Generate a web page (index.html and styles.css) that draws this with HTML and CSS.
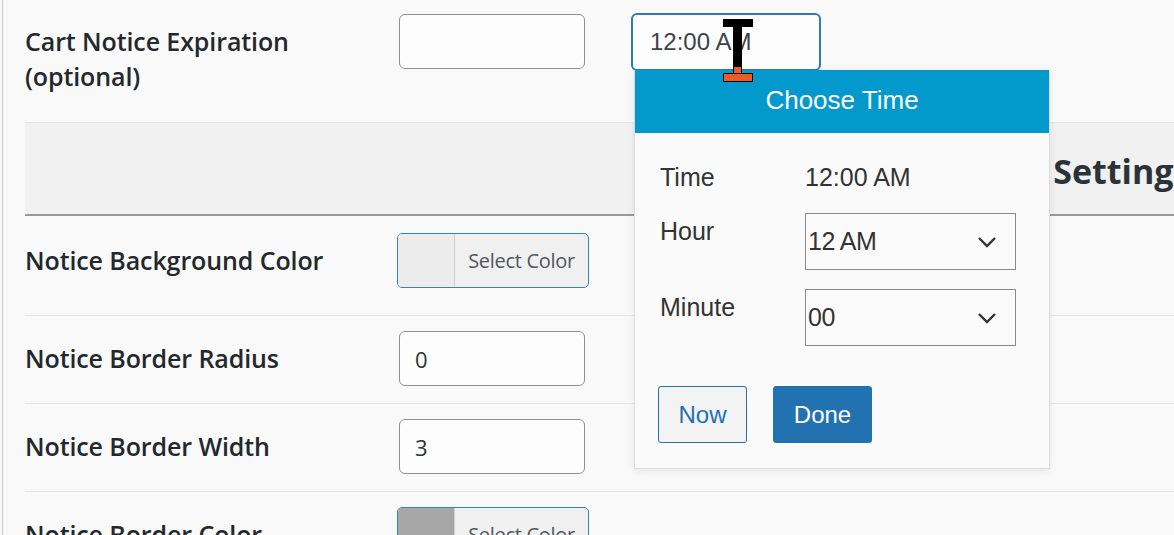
FILE: index.html
```html
<!DOCTYPE html>
<html lang="en">
  <head>
    <meta charset="UTF-8" />
    <meta name="viewport" content="width=device-width, initial-scale=1.0" />
    <title>Cart Notice Settings</title>
    <link rel="stylesheet" href="styles.css">
  </head>
  <body>
    <div class="wrap">
      <div class="row row-first">
        <div class="label label-top">Cart Notice Expiration<br />(optional)</div>
        <div class="fields">
          <input class="text-input" type="text" value="" />
          <input class="text-input time-input" type="text" value="12:00 AM" />
        </div>
      </div>

      <div class="section-head">
        <h2>Notice Settings</h2>
      </div>

      <div class="row row-color">
        <div class="label">Notice Background Color</div>
        <button class="color-btn" type="button">
          <span class="swatch"></span>
          <span class="color-text">Select Color</span>
        </button>
      </div>

      <div class="row">
        <div class="label">Notice Border Radius</div>
        <input class="text-input" type="text" value="0" />
      </div>

      <div class="row">
        <div class="label">Notice Border Width</div>
        <input class="text-input" type="text" value="3" />
      </div>

      <div class="row row-last">
        <div class="label">Notice Border Color</div>
        <button class="color-btn" type="button">
          <span class="swatch swatch-dark"></span>
          <span class="color-text">Select Color</span>
        </button>
      </div>
    </div>

    <!-- time picker popup -->
    <div class="picker">
      <div class="picker-head">Choose Time</div>
      <div class="picker-body">
        <div class="picker-grid">
          <span class="picker-label">Time</span>
          <span class="picker-value">12:00 AM</span>

          <span class="picker-label">Hour</span>
          <div class="select">
            <span>12 AM</span>
            <svg width="20" height="12" viewBox="0 0 20 12">
              <path d="M2 2 L10 10 L18 2" fill="none" stroke="#333" stroke-width="2.4" />
            </svg>
          </div>

          <span class="picker-label">Minute</span>
          <div class="select">
            <span>00</span>
            <svg width="20" height="12" viewBox="0 0 20 12">
              <path d="M2 2 L10 10 L18 2" fill="none" stroke="#333" stroke-width="2.4" />
            </svg>
          </div>
        </div>
        <div class="picker-actions">
          <button class="btn btn-now" type="button">Now</button>
          <button class="btn btn-done" type="button">Done</button>
        </div>
      </div>
    </div>

    <!-- mouse cursor -->
    <svg class="cursor" width="30" height="63" viewBox="0 0 30 63">
      <rect x="0" y="0" width="30" height="8" fill="#000" />
      <rect x="10" y="8" width="9" height="44" fill="#000" />
      <rect x="10.5" y="47.5" width="8" height="8" fill="#f05a28" stroke="#000" />
      <rect x="0.5" y="54.5" width="29" height="8" fill="#f05a28" stroke="#000" />
    </svg>
  </body>
</html>
```

FILE: styles.css
```css
/* Global */
body {
  margin: 0;
  background: #f9f9f9;
  font-family: "Open Sans", "Noto Sans", sans-serif;
  color: #1d2327;
  overflow: hidden;
}
.wrap {
  margin-left: 2px;
  border-left: 1px solid #c9c9c9;
  padding-left: 22px;
  height: 535px;
}
/* Settings rows */
.row {
  display: flex;
  align-items: center;
  padding: 15px 0 17px;
  border-bottom: 1px solid #e4e4e4;
}
.row-first {
  align-items: flex-start;
  padding: 14px 0 0;
  height: 108px;
  border-bottom: none;
}
.row-color {
  padding: 17px 0 27px;
}
.row-last {
  border-bottom: none;
}
.label {
  width: 374px;
  flex-shrink: 0;
  font-size: 25px;
  font-weight: 600;
  line-height: 35px;
  letter-spacing: -0.1px;
  color: #23282d;
}
.label-top {
  margin-top: 10px;
}
.fields {
  display: flex;
  gap: 46px;
}
.text-input {
  box-sizing: border-box;
  width: 186px;
  height: 55px;
  padding: 0 15px;
  border: 1px solid #8c8f94;
  border-radius: 6px;
  background: #fdfdfd;
  font-family: "Open Sans", sans-serif;
  font-size: 22px;
  color: #2c3338;
}
.time-input {
  width: 190px;
  height: 58px;
  margin-top: -1px;
  border: 2px solid #2f79b8;
  padding: 0 17px;
  font-family: "Liberation Sans", Arial, sans-serif;
  font-size: 24px;
  color: #3c434a;
}
/* Section header */
.section-head {
  background: #f1f1f1;
  border-top: 1px solid #e6e6e6;
  border-bottom: 2px solid #9a9a9a;
  height: 91px;
  display: flex;
  align-items: center;
}
.section-head h2 {
  margin: 4px 0 0;
  padding-left: 908px;
  font-size: 34px;
  font-weight: 700;
  color: #2c3338;
  white-space: nowrap;
}
/* Color button */
.color-btn {
  display: flex;
  margin-left: -2px;
  padding: 0;
  width: 192px;
  height: 55px;
  border: 1px solid #3582c4;
  border-radius: 5px;
  background: #f0f0f0;
  overflow: hidden;
  cursor: pointer;
}
.swatch {
  width: 56px;
  height: 100%;
  background: #ececec;
  border-right: 1px solid #cfcfcf;
}
.swatch-dark {
  background: #a7a7a7;
}
.color-text {
  flex: 1;
  align-self: center;
  text-align: center;
  font-family: "Open Sans", sans-serif;
  font-size: 20px;
  letter-spacing: -0.3px;
  color: #50575e;
}
/* Time picker */
.picker {
  position: absolute;
  left: 634px;
  top: 70px;
  width: 414px;
  height: 398px;
  background: #fafafa;
  border: 1px solid #dcdcdc;
  border-top: none;
  box-shadow: 0 2px 8px rgba(0, 0, 0, 0.08);
  font-family: "Liberation Sans", Arial, sans-serif;
  color: #333;
}
.picker-head {
  height: 63px;
  line-height: 61px;
  background: #0399cc;
  color: #ffffff;
  text-align: center;
  font-size: 26px;
}
.picker-body {
  padding: 26px 32px 0 25px;
}
.picker-grid {
  display: grid;
  grid-template-columns: 145px 211px;
  row-gap: 19px;
  font-size: 25px;
}
.picker-label {
  padding-top: 4px;
}
.picker-value {
  padding-top: 4px;
  margin-bottom: 2px;
}
.select {
  box-sizing: border-box;
  height: 57px;
  display: flex;
  align-items: center;
  justify-content: space-between;
  padding: 0 18px 0 2px;
  border: 1px solid #8a8a8a;
  background: #fbfbfb;
}
.select span {
  letter-spacing: -0.5px;
}
.picker-actions {
  display: flex;
  gap: 26px;
  margin: 40px 0 0 -2px;
}
.btn {
  height: 57px;
  border-radius: 3px;
  font-family: "Liberation Sans", Arial, sans-serif;
  font-size: 24px;
  cursor: pointer;
}
.btn-now {
  width: 89px;
  border: 1px solid #2271b1;
  background: #f3f3f3;
  color: #2271b1;
}
.btn-done {
  width: 99px;
  border: 1px solid #2271b1;
  background: #2271b1;
  color: #ffffff;
}
/* Mouse pointer overlay */
.cursor {
  position: absolute;
  left: 723px;
  top: 19px;
}
```
